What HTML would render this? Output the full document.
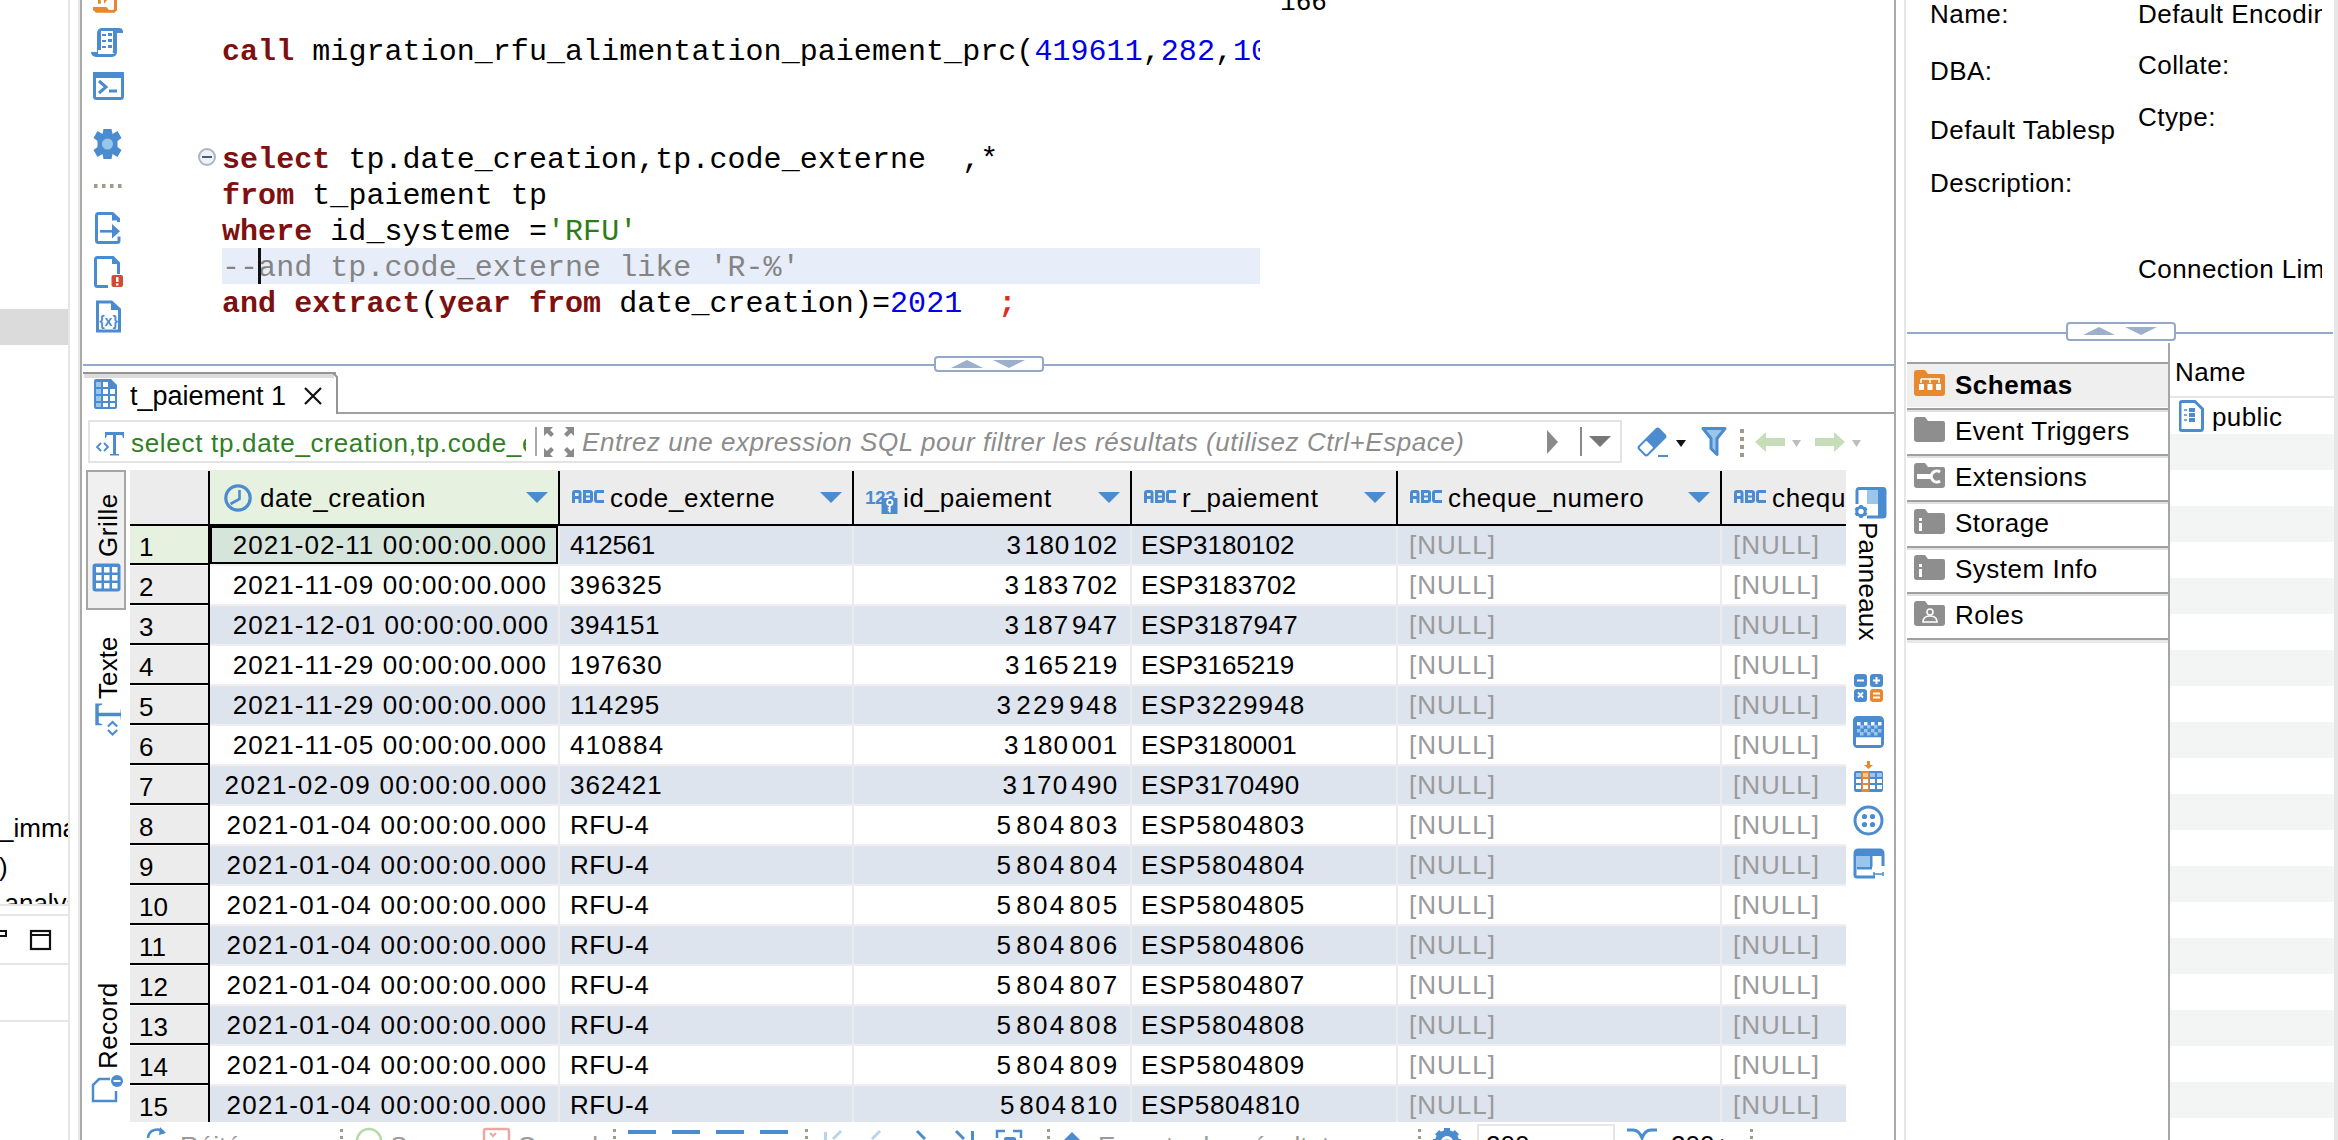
<!DOCTYPE html><html><head><meta charset="utf-8"><style>
*{margin:0;padding:0;box-sizing:border-box}
html,body{width:2338px;height:1140px;overflow:hidden;background:#fff;font-family:"Liberation Sans",sans-serif;color:#000}
.abs{position:absolute}
.mono{font-family:"Liberation Mono",monospace;font-size:30px;line-height:36px;white-space:pre;letter-spacing:0.05px}
.kw{color:#7f1010;font-weight:bold}
.num{color:#0000e6}
.str{color:#2e7d14}
.cm{color:#848484}
.semi{color:#e02c1c}
.t{white-space:pre;position:absolute}
</style></head><body>
<div class="abs" style="left:0;top:309px;width:68px;height:36px;background:#dbdbdb"></div>
<div class="abs" style="left:68px;top:0;width:2px;height:1140px;background:#e6e6e6"></div>
<div class="abs" style="left:78px;top:0;width:2px;height:1140px;background:#e8e8e8"></div>
<div class="abs" style="left:80px;top:0;width:2px;height:1140px;background:#a9a9a9"></div>
<div class="abs" style="left:222px;top:248px;width:1038px;height:36px;background:#e8eef9"></div>
<div class="abs" style="left:0;top:0;width:1260px;height:360px;overflow:hidden">
<div class="abs mono" style="left:222px;top:34px"><span class="kw">call</span> migration_rfu_alimentation_paiement_prc(<span class="num">419611</span>,<span class="num">282</span>,<span class="num">1000</span></div>
<div class="abs mono" style="left:222px;top:142px"><span class="kw">select</span> tp.date_creation,tp.code_externe  ,*</div>
<div class="abs mono" style="left:222px;top:178px"><span class="kw">from</span> t_paiement tp</div>
<div class="abs mono" style="left:222px;top:214px"><span class="kw">where</span> id_systeme =<span class="str">'RFU'</span></div>
<div class="abs mono" style="left:222px;top:250px"><span class="cm">--and tp.code_externe like 'R-%'</span></div>
<div class="abs mono" style="left:222px;top:286px"><span class="kw">and</span> <span class="kw">extract</span>(<span class="kw">year</span> <span class="kw">from</span> date_creation)=<span class="num">2021</span>  <span class="semi" style="font-weight:bold">;</span></div>
</div>
<div class="abs" style="left:258px;top:248px;width:3px;height:36px;background:#111"></div>
<div class="abs mono" style="left:1280px;top:-15px;font-size:26px">166</div>
<div class="abs" style="left:198px;top:148px;width:18px;height:18px;border-radius:50%;border:2px solid #a9b6c8;background:#eef1f5"></div>
<div class="abs" style="left:202px;top:156px;width:10px;height:2px;background:#4a5a70"></div>
<div class="abs" style="left:83px;top:364px;width:1811px;height:2px;background:#94a9c9"></div>
<div class="abs" style="left:934px;top:356px;width:110px;height:16px;border:2px solid #94a9c9;border-radius:4px;background:#fff"></div>
<svg class="abs" style="left:934px;top:356px" width="110" height="16"><polygon points="17,12 33,4 49,12" fill="#9cb0cc"/><polygon points="59,4 91,4 75,12" fill="#9cb0cc"/></svg>
<div class="abs" style="left:1894px;top:0;width:2px;height:1140px;background:#a9a9a9"></div>
<div class="abs" style="left:1904px;top:0;width:2px;height:1140px;background:#e6e6e6"></div>
<svg class="abs" style="left:85px;top:0" width="45" height="340"><path d="M8,7 H21.5 L24,10 H28 L29,9 V-1 H32 V10.5 L29.5,12.8 H11 L8,10 Z" fill="#e5882f"/><rect x="13" y="-1" width="2.8" height="4.8" fill="#e5882f"/><path d="M19,-1 H23 L19,3.8Z" fill="#e5882f"/><path d="M17,28 h17 a4,4 0 0 1 4,4 v1 h-6 v19 a5,5 0 0 1 -5,5 h-16 a5,5 0 0 1 -5,-5 v-0 h6 v-19 a5,5 0 0 1 5,-5z" fill="#4a8ccf"/><path d="M16,31 h12 v19 a3,3 0 0 0 2,4 h-17 v-4 h3z" fill="#fff"/><rect x="17" y="34" width="4" height="2" fill="#4a8ccf"/><rect x="23" y="33" width="4" height="3" fill="#4a8ccf"/><rect x="17" y="40" width="4" height="2" fill="#4a8ccf"/><rect x="23" y="39" width="4" height="3" fill="#4a8ccf"/><rect x="17" y="46" width="4" height="2" fill="#4a8ccf"/><rect x="23" y="45" width="4" height="3" fill="#4a8ccf"/><rect x="9.5" y="73.5" width="28" height="25" rx="2" fill="none" stroke="#4a8ccf" stroke-width="3"/><rect x="8" y="72" width="31" height="6" fill="#4a8ccf"/><path d="M14,81 l7,6 l-7,6" fill="none" stroke="#4a8ccf" stroke-width="3"/><rect x="24" y="89.5" width="8" height="3" fill="#4a8ccf"/><g transform="translate(22.5,144)"><path d="M-4,-15 h8 l1,5 l5,-3 l4,7 l-4,3 v6 l4,3 l-4,7 l-5,-3 l-1,5 h-8 l-1,-5 l-5,3 l-4,-7 l4,-3 v-6 l-4,-3 l4,-7 l5,3z" fill="#4a8ccf"/><circle r="5.5" fill="#9ac6ea"/></g><rect x="9" y="184" width="3.5" height="4" fill="#a09a8a"/><rect x="17" y="184" width="3.5" height="4" fill="#a09a8a"/><rect x="25" y="184" width="3.5" height="4" fill="#a09a8a"/><rect x="33" y="184" width="3.5" height="4" fill="#a09a8a"/><path d="M33.5,222 v-3 l-6,-5.5 h-14 a2,2 0 0 0 -2,2 v25 a2,2 0 0 0 2,2 h18.5 a2,2 0 0 0 2,-2 v-4" fill="none" stroke="#4a8ccf" stroke-width="3"/><path d="M27,213 v7.5 h7.5z" fill="#4a8ccf"/><rect x="15" y="230" width="15" height="2.6" fill="#4a8ccf"/><path d="M27,224 l8,7.3 l-8,7.3z" fill="#4a8ccf"/><path d="M23,286.5 h-10.5 a2,2 0 0 1 -2,-2 v-25 a2,2 0 0 1 2,-2 h15.5 l5.5,5.5 v11" fill="none" stroke="#4a8ccf" stroke-width="3"/><path d="M27,258 v6 h6z" fill="#4a8ccf"/><rect x="26.5" y="275" width="11.5" height="12" rx="2" fill="#d14a35"/><rect x="31" y="277" width="2.5" height="5" fill="#fff"/><rect x="31" y="283.5" width="2.5" height="2" fill="#fff"/><path d="M12.5,331 v-29 h14 l8,7.5 v21.5z" fill="none" stroke="#4a8ccf" stroke-width="3"/><path d="M26,302 v8 h8z" fill="#4a8ccf"/><text x="23.5" y="325.5" font-family="Liberation Sans" font-weight="bold" font-size="14" fill="#4a8ccf" text-anchor="middle">{x}</text></svg>
<div class="abs" style="left:83px;top:372px;width:253px;height:2px;background:#959595"></div>
<div class="abs" style="left:84px;top:374px;width:250px;height:4px;background:#dcdcdc"></div>
<svg class="abs" style="left:330px;top:372px" width="10" height="44"><path d="M0,1 h3 l4,4 v36 h3" fill="none" stroke="#959595" stroke-width="2"/></svg>
<div class="abs" style="left:338px;top:412px;width:1556px;height:2px;background:#a0a0a0"></div>
<svg class="abs" style="left:93px;top:379px" width="26" height="31"><path d="M3,0 h15 l6,6 v22 a2,2 0 0 1 -2,2 h-19 a2,2 0 0 1 -2,-2 v-26 a2,2 0 0 1 2,-2z" fill="#4a8ccf"/><rect x="3" y="3" width="5" height="5" fill="#9ac6ea"/><rect x="3" y="10" width="5" height="5" fill="#9ac6ea"/><rect x="3" y="17" width="5" height="5" fill="#9ac6ea"/><rect x="3" y="24" width="5" height="4" fill="#9ac6ea"/><rect x="10" y="3" width="5" height="5" fill="#fff"/><rect x="10" y="10" width="5" height="5" fill="#fff"/><rect x="10" y="17" width="5" height="5" fill="#fff"/><rect x="10" y="24" width="5" height="4" fill="#fff"/><rect x="17" y="10" width="5" height="5" fill="#fff"/><rect x="17" y="17" width="5" height="5" fill="#fff"/><rect x="17" y="24" width="5" height="4" fill="#fff"/></svg>
<div class="t" style="left:130px;top:380px;font-size:27px;line-height:32px">t_paiement 1</div>
<svg class="abs" style="left:302px;top:385px" width="22" height="22"><path d="M3,3 L19,19 M19,3 L3,19" stroke="#111" stroke-width="2.2"/></svg>
<div class="abs" style="left:88px;top:420px;width:1534px;height:43px;border:2px solid #e3e3e3;background:#fff"></div>
<svg class="abs" style="left:94px;top:430px" width="32" height="26"><path d="M7,13 l-4,4 l4,4 M10,13 l4,4 l-4,4" fill="none" stroke="#4a8ccf" stroke-width="1.8"/><path d="M11,2 h19 v6 l-1,0 l-1,-3 h-6 v19 h3 v1.5 h-9 v-1.5 h3 v-19 h-6 l-1,3 h-1z" fill="#4a8ccf"/></svg>
<div class="abs" style="left:130px;top:424px;width:396px;height:36px;overflow:hidden"><div class="t" style="left:1px;top:3px;font-size:26px;line-height:32px;letter-spacing:0.7px;color:#2e8022">select tp.date_creation,tp.code_externe  ,*</div></div>
<div class="abs" style="left:535px;top:427px;width:2px;height:29px;background:#a8a8a8"></div>
<svg class="abs" style="left:543px;top:426px" width="32" height="32" fill="#8a8a8a"><path d="M1,1 h9 l-3,3 l4,4 l-3,3 l-4,-4 l-3,3z"/><path d="M31,1 h-9 l3,3 l-4,4 l3,3 l4,-4 l3,3z"/><path d="M1,31 h9 l-3,-3 l4,-4 l-3,-3 l-4,4 l-3,-3z"/><path d="M31,31 h-9 l3,-3 l-4,-4 l3,-3 l4,4 l3,-3z"/></svg>
<div class="t" style="left:582px;top:426px;font-size:26px;line-height:32px;letter-spacing:0.55px;color:#8c8c8c;font-style:italic">Entrez une expression SQL pour filtrer les résultats (utilisez Ctrl+Espace)</div>
<svg class="abs" style="left:1540px;top:426px" width="80" height="32"><path d="M7,4 l11,12 l-11,12z" fill="#8a8a8a"/><rect x="40" y="1" width="2" height="29" fill="#8a8a8a"/><path d="M49,10 h22 l-11,11z" fill="#777"/></svg>
<svg class="abs" style="left:1636px;top:424px" width="240" height="36"><g transform="translate(16,18) rotate(45)"><rect x="-7" y="-15" width="14" height="30" rx="3" fill="#4a8ccf"/><rect x="-5" y="3" width="10" height="10" rx="1" fill="#fff"/></g><rect x="22" y="31" width="10" height="2" fill="#4a8ccf"/><path d="M40,16 h10 l-5,7z" fill="#111"/><path d="M67,4.5 h22 l-8,10 v16 l-6,-6 v-10z" fill="#9ac6ea" stroke="#4a8ccf" stroke-width="3" stroke-linejoin="round"/><rect x="104" y="5" width="4" height="4" fill="#a09a8a"/><rect x="104" y="13" width="4" height="4" fill="#a09a8a"/><rect x="104" y="21" width="4" height="4" fill="#a09a8a"/><rect x="104" y="29" width="4" height="4" fill="#a09a8a"/><path d="M119,18 l11,-10 v6 h19 v8 h-19 v6z" fill="#c5deb9"/><path d="M156,16 h9 l-4.5,7z" fill="#bdbdbd"/><path d="M209,18 l-11,-10 v6 h-19 v8 h19 v6z" fill="#c5deb9"/><path d="M216,16 h9 l-4.5,7z" fill="#bdbdbd"/></svg>
<div class="abs" style="left:130px;top:470px;width:1716px;height:54px;background:#ececec"></div>
<div class="abs" style="left:210px;top:470px;width:348px;height:54px;background:#e7f1e0"></div>
<div class="abs" style="left:208px;top:471px;width:2px;height:55px;background:#000"></div>
<div class="abs" style="left:558px;top:471px;width:2px;height:55px;background:#000"></div>
<div class="abs" style="left:852px;top:471px;width:2px;height:55px;background:#000"></div>
<div class="abs" style="left:1130px;top:471px;width:2px;height:55px;background:#000"></div>
<div class="abs" style="left:1396px;top:471px;width:2px;height:55px;background:#000"></div>
<div class="abs" style="left:1720px;top:471px;width:2px;height:55px;background:#000"></div>
<div class="abs" style="left:130px;top:524px;width:1716px;height:2px;background:#000"></div>
<div class="t" style="left:260px;top:483px;font-size:26px;line-height:30px;letter-spacing:0.65px">date_creation</div>
<div class="t" style="left:610px;top:483px;font-size:26px;line-height:30px;letter-spacing:0.65px">code_externe</div>
<div class="t" style="left:903px;top:483px;font-size:26px;line-height:30px;letter-spacing:0.65px">id_paiement</div>
<div class="t" style="left:1182px;top:483px;font-size:26px;line-height:30px;letter-spacing:0.65px">r_paiement</div>
<div class="t" style="left:1448px;top:483px;font-size:26px;line-height:30px;letter-spacing:0.65px">cheque_numero</div>
<div class="abs" style="left:1722px;top:470px;width:124px;height:54px;overflow:hidden"><div class="t" style="left:50px;top:13px;font-size:26px;line-height:30px;letter-spacing:0.65px">cheque_montant</div></div>
<svg class="abs" style="left:572px;top:490px" width="33" height="13" fill="#4a8ccf"><path fill-rule="evenodd" d="M0,13 V3 Q0,0 3,0 H6.5 Q9.5,0 9.5,3 V13 H6.5 V9 H3 V13 Z M3,3 H6.5 V6 H3 Z"/><path fill-rule="evenodd" d="M11,0 H17.5 Q21,0 21,3 V10 Q21,13 17.5,13 H11 Z M14,3 H18 V5.5 H14Z M14,7.5 H18 V10 H14Z"/><path d="M25,0 H32 V3 H25 V10 H32 V13 H25 Q22,13 22,10 V3 Q22,0 25,0Z"/></svg>
<svg class="abs" style="left:1144px;top:490px" width="33" height="13" fill="#4a8ccf"><path fill-rule="evenodd" d="M0,13 V3 Q0,0 3,0 H6.5 Q9.5,0 9.5,3 V13 H6.5 V9 H3 V13 Z M3,3 H6.5 V6 H3 Z"/><path fill-rule="evenodd" d="M11,0 H17.5 Q21,0 21,3 V10 Q21,13 17.5,13 H11 Z M14,3 H18 V5.5 H14Z M14,7.5 H18 V10 H14Z"/><path d="M25,0 H32 V3 H25 V10 H32 V13 H25 Q22,13 22,10 V3 Q22,0 25,0Z"/></svg>
<svg class="abs" style="left:1410px;top:490px" width="33" height="13" fill="#4a8ccf"><path fill-rule="evenodd" d="M0,13 V3 Q0,0 3,0 H6.5 Q9.5,0 9.5,3 V13 H6.5 V9 H3 V13 Z M3,3 H6.5 V6 H3 Z"/><path fill-rule="evenodd" d="M11,0 H17.5 Q21,0 21,3 V10 Q21,13 17.5,13 H11 Z M14,3 H18 V5.5 H14Z M14,7.5 H18 V10 H14Z"/><path d="M25,0 H32 V3 H25 V10 H32 V13 H25 Q22,13 22,10 V3 Q22,0 25,0Z"/></svg>
<svg class="abs" style="left:1734px;top:490px" width="33" height="13" fill="#4a8ccf"><path fill-rule="evenodd" d="M0,13 V3 Q0,0 3,0 H6.5 Q9.5,0 9.5,3 V13 H6.5 V9 H3 V13 Z M3,3 H6.5 V6 H3 Z"/><path fill-rule="evenodd" d="M11,0 H17.5 Q21,0 21,3 V10 Q21,13 17.5,13 H11 Z M14,3 H18 V5.5 H14Z M14,7.5 H18 V10 H14Z"/><path d="M25,0 H32 V3 H25 V10 H32 V13 H25 Q22,13 22,10 V3 Q22,0 25,0Z"/></svg>
<svg class="abs" style="left:223px;top:483px" width="30" height="30"><circle cx="15" cy="15" r="12.2" fill="none" stroke="#4a8ccf" stroke-width="3.2"/><path d="M16.5,7 v9 l-9,5" fill="none" stroke="#4a8ccf" stroke-width="2.6"/></svg>
<svg class="abs" style="left:864px;top:488px" width="36" height="28"><text x="1" y="16" font-family="Liberation Sans" font-weight="bold" font-size="19" fill="#4a8ccf" letter-spacing="-0.5">123</text><rect x="17.5" y="10" width="16" height="16" fill="#4a8ccf"/><circle cx="25.8" cy="14.5" r="2.7" fill="none" stroke="#fff" stroke-width="1.8"/><path d="M25.8,17 v7.5 M25.8,20 h-2 M25.8,22.5 h-2" stroke="#fff" stroke-width="1.6"/></svg>
<svg class="abs" style="left:526px;top:492px" width="24" height="12"><path d="M0,0 h22 l-11,11z" fill="#4a8ccf"/></svg>
<svg class="abs" style="left:820px;top:492px" width="24" height="12"><path d="M0,0 h22 l-11,11z" fill="#4a8ccf"/></svg>
<svg class="abs" style="left:1098px;top:492px" width="24" height="12"><path d="M0,0 h22 l-11,11z" fill="#4a8ccf"/></svg>
<svg class="abs" style="left:1364px;top:492px" width="24" height="12"><path d="M0,0 h22 l-11,11z" fill="#4a8ccf"/></svg>
<svg class="abs" style="left:1688px;top:492px" width="24" height="12"><path d="M0,0 h22 l-11,11z" fill="#4a8ccf"/></svg>
<div class="abs" style="left:210px;top:526px;width:1636px;height:38px;background:#dde4ee"></div>
<div class="abs" style="left:210px;top:564px;width:1636px;height:2px;background:#efefef"></div>
<div class="abs" style="left:130px;top:526px;width:78px;height:38px;background:#e7f1e0"></div>
<div class="abs" style="left:130px;top:563px;width:80px;height:2px;background:#000"></div>
<div class="t" style="left:139px;top:532px;font-size:26px;line-height:30px">1</div>
<div class="t" style="left:570px;top:530px;font-size:26px;line-height:30px;letter-spacing:-0.32px">412561</div>
<div class="t" style="left:1006.5px;top:530px;font-size:26px;line-height:30px;letter-spacing:0.58px">3<span style="margin-left:3px">180</span><span style="margin-left:3px">102</span></div>
<div class="t" style="left:1141px;top:530px;font-size:26px;line-height:30px;letter-spacing:0.02px">ESP3180102</div>
<div class="t" style="left:1409px;top:530px;font-size:26px;line-height:30px;color:#9a9a9a;letter-spacing:1.0px">[NULL]</div>
<div class="t" style="left:1733px;top:530px;font-size:26px;line-height:30px;color:#9a9a9a;letter-spacing:1.0px">[NULL]</div>
<div class="abs" style="left:210px;top:566px;width:1636px;height:38px;background:#ffffff"></div>
<div class="abs" style="left:210px;top:604px;width:1636px;height:2px;background:#efefef"></div>
<div class="abs" style="left:130px;top:566px;width:78px;height:38px;background:#ececec"></div>
<div class="abs" style="left:130px;top:603px;width:80px;height:2px;background:#000"></div>
<div class="t" style="left:139px;top:572px;font-size:26px;line-height:30px">2</div>
<div class="t" style="left:232.8px;top:570px;font-size:26px;line-height:30px;letter-spacing:1.05px">2021-11-09 00:00:00.000</div>
<div class="t" style="left:570px;top:570px;font-size:26px;line-height:30px;letter-spacing:1.00px">396325</div>
<div class="t" style="left:1004.6px;top:570px;font-size:26px;line-height:30px;letter-spacing:0.90px">3<span style="margin-left:3px">183</span><span style="margin-left:3px">702</span></div>
<div class="t" style="left:1141px;top:570px;font-size:26px;line-height:30px;letter-spacing:0.22px">ESP3183702</div>
<div class="t" style="left:1409px;top:570px;font-size:26px;line-height:30px;color:#9a9a9a;letter-spacing:1.0px">[NULL]</div>
<div class="t" style="left:1733px;top:570px;font-size:26px;line-height:30px;color:#9a9a9a;letter-spacing:1.0px">[NULL]</div>
<div class="abs" style="left:210px;top:606px;width:1636px;height:38px;background:#dde4ee"></div>
<div class="abs" style="left:210px;top:644px;width:1636px;height:2px;background:#efefef"></div>
<div class="abs" style="left:130px;top:606px;width:78px;height:38px;background:#ececec"></div>
<div class="abs" style="left:130px;top:643px;width:80px;height:2px;background:#000"></div>
<div class="t" style="left:139px;top:612px;font-size:26px;line-height:30px">3</div>
<div class="t" style="left:232.8px;top:610px;font-size:26px;line-height:30px;letter-spacing:1.05px">2021-12-01 00:00:00.000</div>
<div class="t" style="left:570px;top:610px;font-size:26px;line-height:30px;letter-spacing:0.52px">394151</div>
<div class="t" style="left:1004.6px;top:610px;font-size:26px;line-height:30px;letter-spacing:0.90px">3<span style="margin-left:3px">187</span><span style="margin-left:3px">947</span></div>
<div class="t" style="left:1141px;top:610px;font-size:26px;line-height:30px;letter-spacing:0.38px">ESP3187947</div>
<div class="t" style="left:1409px;top:610px;font-size:26px;line-height:30px;color:#9a9a9a;letter-spacing:1.0px">[NULL]</div>
<div class="t" style="left:1733px;top:610px;font-size:26px;line-height:30px;color:#9a9a9a;letter-spacing:1.0px">[NULL]</div>
<div class="abs" style="left:210px;top:646px;width:1636px;height:38px;background:#ffffff"></div>
<div class="abs" style="left:210px;top:684px;width:1636px;height:2px;background:#efefef"></div>
<div class="abs" style="left:130px;top:646px;width:78px;height:38px;background:#ececec"></div>
<div class="abs" style="left:130px;top:683px;width:80px;height:2px;background:#000"></div>
<div class="t" style="left:139px;top:652px;font-size:26px;line-height:30px">4</div>
<div class="t" style="left:232.8px;top:650px;font-size:26px;line-height:30px;letter-spacing:1.05px">2021-11-29 00:00:00.000</div>
<div class="t" style="left:570px;top:650px;font-size:26px;line-height:30px;letter-spacing:1.00px">197630</div>
<div class="t" style="left:1005.0px;top:650px;font-size:26px;line-height:30px;letter-spacing:0.83px">3<span style="margin-left:3px">165</span><span style="margin-left:3px">219</span></div>
<div class="t" style="left:1141px;top:650px;font-size:26px;line-height:30px;letter-spacing:-0.01px">ESP3165219</div>
<div class="t" style="left:1409px;top:650px;font-size:26px;line-height:30px;color:#9a9a9a;letter-spacing:1.0px">[NULL]</div>
<div class="t" style="left:1733px;top:650px;font-size:26px;line-height:30px;color:#9a9a9a;letter-spacing:1.0px">[NULL]</div>
<div class="abs" style="left:210px;top:686px;width:1636px;height:38px;background:#dde4ee"></div>
<div class="abs" style="left:210px;top:724px;width:1636px;height:2px;background:#efefef"></div>
<div class="abs" style="left:130px;top:686px;width:78px;height:38px;background:#ececec"></div>
<div class="abs" style="left:130px;top:723px;width:80px;height:2px;background:#000"></div>
<div class="t" style="left:139px;top:692px;font-size:26px;line-height:30px">5</div>
<div class="t" style="left:232.8px;top:690px;font-size:26px;line-height:30px;letter-spacing:1.05px">2021-11-29 00:00:00.000</div>
<div class="t" style="left:570px;top:690px;font-size:26px;line-height:30px;letter-spacing:0.88px">114295</div>
<div class="t" style="left:996.5px;top:690px;font-size:26px;line-height:30px;letter-spacing:2.25px">3<span style="margin-left:3px">229</span><span style="margin-left:3px">948</span></div>
<div class="t" style="left:1141px;top:690px;font-size:26px;line-height:30px;letter-spacing:1.10px">ESP3229948</div>
<div class="t" style="left:1409px;top:690px;font-size:26px;line-height:30px;color:#9a9a9a;letter-spacing:1.0px">[NULL]</div>
<div class="t" style="left:1733px;top:690px;font-size:26px;line-height:30px;color:#9a9a9a;letter-spacing:1.0px">[NULL]</div>
<div class="abs" style="left:210px;top:726px;width:1636px;height:38px;background:#ffffff"></div>
<div class="abs" style="left:210px;top:764px;width:1636px;height:2px;background:#efefef"></div>
<div class="abs" style="left:130px;top:726px;width:78px;height:38px;background:#ececec"></div>
<div class="abs" style="left:130px;top:763px;width:80px;height:2px;background:#000"></div>
<div class="t" style="left:139px;top:732px;font-size:26px;line-height:30px">6</div>
<div class="t" style="left:232.8px;top:730px;font-size:26px;line-height:30px;letter-spacing:1.05px">2021-11-05 00:00:00.000</div>
<div class="t" style="left:570px;top:730px;font-size:26px;line-height:30px;letter-spacing:1.28px">410884</div>
<div class="t" style="left:1004.0px;top:730px;font-size:26px;line-height:30px;letter-spacing:1.00px">3<span style="margin-left:3px">180</span><span style="margin-left:3px">001</span></div>
<div class="t" style="left:1141px;top:730px;font-size:26px;line-height:30px;letter-spacing:0.27px">ESP3180001</div>
<div class="t" style="left:1409px;top:730px;font-size:26px;line-height:30px;color:#9a9a9a;letter-spacing:1.0px">[NULL]</div>
<div class="t" style="left:1733px;top:730px;font-size:26px;line-height:30px;color:#9a9a9a;letter-spacing:1.0px">[NULL]</div>
<div class="abs" style="left:210px;top:766px;width:1636px;height:38px;background:#dde4ee"></div>
<div class="abs" style="left:210px;top:804px;width:1636px;height:2px;background:#efefef"></div>
<div class="abs" style="left:130px;top:766px;width:78px;height:38px;background:#ececec"></div>
<div class="abs" style="left:130px;top:803px;width:80px;height:2px;background:#000"></div>
<div class="t" style="left:139px;top:772px;font-size:26px;line-height:30px">7</div>
<div class="t" style="left:224.6px;top:770px;font-size:26px;line-height:30px;letter-spacing:1.34px">2021-02-09 00:00:00.000</div>
<div class="t" style="left:570px;top:770px;font-size:26px;line-height:30px;letter-spacing:1.00px">362421</div>
<div class="t" style="left:1002.5px;top:770px;font-size:26px;line-height:30px;letter-spacing:1.25px">3<span style="margin-left:3px">170</span><span style="margin-left:3px">490</span></div>
<div class="t" style="left:1141px;top:770px;font-size:26px;line-height:30px;letter-spacing:0.54px">ESP3170490</div>
<div class="t" style="left:1409px;top:770px;font-size:26px;line-height:30px;color:#9a9a9a;letter-spacing:1.0px">[NULL]</div>
<div class="t" style="left:1733px;top:770px;font-size:26px;line-height:30px;color:#9a9a9a;letter-spacing:1.0px">[NULL]</div>
<div class="abs" style="left:210px;top:806px;width:1636px;height:38px;background:#ffffff"></div>
<div class="abs" style="left:210px;top:844px;width:1636px;height:2px;background:#efefef"></div>
<div class="abs" style="left:130px;top:806px;width:78px;height:38px;background:#ececec"></div>
<div class="abs" style="left:130px;top:843px;width:80px;height:2px;background:#000"></div>
<div class="t" style="left:139px;top:812px;font-size:26px;line-height:30px">8</div>
<div class="t" style="left:226.5px;top:810px;font-size:26px;line-height:30px;letter-spacing:1.25px">2021-01-04 00:00:00.000</div>
<div class="t" style="left:570px;top:810px;font-size:26px;line-height:30px;letter-spacing:0.52px">RFU-4</div>
<div class="t" style="left:996.5px;top:810px;font-size:26px;line-height:30px;letter-spacing:2.25px">5<span style="margin-left:3px">804</span><span style="margin-left:3px">803</span></div>
<div class="t" style="left:1141px;top:810px;font-size:26px;line-height:30px;letter-spacing:1.10px">ESP5804803</div>
<div class="t" style="left:1409px;top:810px;font-size:26px;line-height:30px;color:#9a9a9a;letter-spacing:1.0px">[NULL]</div>
<div class="t" style="left:1733px;top:810px;font-size:26px;line-height:30px;color:#9a9a9a;letter-spacing:1.0px">[NULL]</div>
<div class="abs" style="left:210px;top:846px;width:1636px;height:38px;background:#dde4ee"></div>
<div class="abs" style="left:210px;top:884px;width:1636px;height:2px;background:#efefef"></div>
<div class="abs" style="left:130px;top:846px;width:78px;height:38px;background:#ececec"></div>
<div class="abs" style="left:130px;top:883px;width:80px;height:2px;background:#000"></div>
<div class="t" style="left:139px;top:852px;font-size:26px;line-height:30px">9</div>
<div class="t" style="left:226.5px;top:850px;font-size:26px;line-height:30px;letter-spacing:1.25px">2021-01-04 00:00:00.000</div>
<div class="t" style="left:570px;top:850px;font-size:26px;line-height:30px;letter-spacing:0.52px">RFU-4</div>
<div class="t" style="left:996.5px;top:850px;font-size:26px;line-height:30px;letter-spacing:2.25px">5<span style="margin-left:3px">804</span><span style="margin-left:3px">804</span></div>
<div class="t" style="left:1141px;top:850px;font-size:26px;line-height:30px;letter-spacing:1.10px">ESP5804804</div>
<div class="t" style="left:1409px;top:850px;font-size:26px;line-height:30px;color:#9a9a9a;letter-spacing:1.0px">[NULL]</div>
<div class="t" style="left:1733px;top:850px;font-size:26px;line-height:30px;color:#9a9a9a;letter-spacing:1.0px">[NULL]</div>
<div class="abs" style="left:210px;top:886px;width:1636px;height:38px;background:#ffffff"></div>
<div class="abs" style="left:210px;top:924px;width:1636px;height:2px;background:#efefef"></div>
<div class="abs" style="left:130px;top:886px;width:78px;height:38px;background:#ececec"></div>
<div class="abs" style="left:130px;top:923px;width:80px;height:2px;background:#000"></div>
<div class="t" style="left:139px;top:892px;font-size:26px;line-height:30px">10</div>
<div class="t" style="left:226.5px;top:890px;font-size:26px;line-height:30px;letter-spacing:1.25px">2021-01-04 00:00:00.000</div>
<div class="t" style="left:570px;top:890px;font-size:26px;line-height:30px;letter-spacing:0.52px">RFU-4</div>
<div class="t" style="left:996.5px;top:890px;font-size:26px;line-height:30px;letter-spacing:2.25px">5<span style="margin-left:3px">804</span><span style="margin-left:3px">805</span></div>
<div class="t" style="left:1141px;top:890px;font-size:26px;line-height:30px;letter-spacing:1.10px">ESP5804805</div>
<div class="t" style="left:1409px;top:890px;font-size:26px;line-height:30px;color:#9a9a9a;letter-spacing:1.0px">[NULL]</div>
<div class="t" style="left:1733px;top:890px;font-size:26px;line-height:30px;color:#9a9a9a;letter-spacing:1.0px">[NULL]</div>
<div class="abs" style="left:210px;top:926px;width:1636px;height:38px;background:#dde4ee"></div>
<div class="abs" style="left:210px;top:964px;width:1636px;height:2px;background:#efefef"></div>
<div class="abs" style="left:130px;top:926px;width:78px;height:38px;background:#ececec"></div>
<div class="abs" style="left:130px;top:963px;width:80px;height:2px;background:#000"></div>
<div class="t" style="left:139px;top:932px;font-size:26px;line-height:30px">11</div>
<div class="t" style="left:226.5px;top:930px;font-size:26px;line-height:30px;letter-spacing:1.25px">2021-01-04 00:00:00.000</div>
<div class="t" style="left:570px;top:930px;font-size:26px;line-height:30px;letter-spacing:0.52px">RFU-4</div>
<div class="t" style="left:996.5px;top:930px;font-size:26px;line-height:30px;letter-spacing:2.25px">5<span style="margin-left:3px">804</span><span style="margin-left:3px">806</span></div>
<div class="t" style="left:1141px;top:930px;font-size:26px;line-height:30px;letter-spacing:1.10px">ESP5804806</div>
<div class="t" style="left:1409px;top:930px;font-size:26px;line-height:30px;color:#9a9a9a;letter-spacing:1.0px">[NULL]</div>
<div class="t" style="left:1733px;top:930px;font-size:26px;line-height:30px;color:#9a9a9a;letter-spacing:1.0px">[NULL]</div>
<div class="abs" style="left:210px;top:966px;width:1636px;height:38px;background:#ffffff"></div>
<div class="abs" style="left:210px;top:1004px;width:1636px;height:2px;background:#efefef"></div>
<div class="abs" style="left:130px;top:966px;width:78px;height:38px;background:#ececec"></div>
<div class="abs" style="left:130px;top:1003px;width:80px;height:2px;background:#000"></div>
<div class="t" style="left:139px;top:972px;font-size:26px;line-height:30px">12</div>
<div class="t" style="left:226.5px;top:970px;font-size:26px;line-height:30px;letter-spacing:1.25px">2021-01-04 00:00:00.000</div>
<div class="t" style="left:570px;top:970px;font-size:26px;line-height:30px;letter-spacing:0.52px">RFU-4</div>
<div class="t" style="left:996.5px;top:970px;font-size:26px;line-height:30px;letter-spacing:2.25px">5<span style="margin-left:3px">804</span><span style="margin-left:3px">807</span></div>
<div class="t" style="left:1141px;top:970px;font-size:26px;line-height:30px;letter-spacing:1.10px">ESP5804807</div>
<div class="t" style="left:1409px;top:970px;font-size:26px;line-height:30px;color:#9a9a9a;letter-spacing:1.0px">[NULL]</div>
<div class="t" style="left:1733px;top:970px;font-size:26px;line-height:30px;color:#9a9a9a;letter-spacing:1.0px">[NULL]</div>
<div class="abs" style="left:210px;top:1006px;width:1636px;height:38px;background:#dde4ee"></div>
<div class="abs" style="left:210px;top:1044px;width:1636px;height:2px;background:#efefef"></div>
<div class="abs" style="left:130px;top:1006px;width:78px;height:38px;background:#ececec"></div>
<div class="abs" style="left:130px;top:1043px;width:80px;height:2px;background:#000"></div>
<div class="t" style="left:139px;top:1012px;font-size:26px;line-height:30px">13</div>
<div class="t" style="left:226.5px;top:1010px;font-size:26px;line-height:30px;letter-spacing:1.25px">2021-01-04 00:00:00.000</div>
<div class="t" style="left:570px;top:1010px;font-size:26px;line-height:30px;letter-spacing:0.52px">RFU-4</div>
<div class="t" style="left:996.5px;top:1010px;font-size:26px;line-height:30px;letter-spacing:2.25px">5<span style="margin-left:3px">804</span><span style="margin-left:3px">808</span></div>
<div class="t" style="left:1141px;top:1010px;font-size:26px;line-height:30px;letter-spacing:1.10px">ESP5804808</div>
<div class="t" style="left:1409px;top:1010px;font-size:26px;line-height:30px;color:#9a9a9a;letter-spacing:1.0px">[NULL]</div>
<div class="t" style="left:1733px;top:1010px;font-size:26px;line-height:30px;color:#9a9a9a;letter-spacing:1.0px">[NULL]</div>
<div class="abs" style="left:210px;top:1046px;width:1636px;height:38px;background:#ffffff"></div>
<div class="abs" style="left:210px;top:1084px;width:1636px;height:2px;background:#efefef"></div>
<div class="abs" style="left:130px;top:1046px;width:78px;height:38px;background:#ececec"></div>
<div class="abs" style="left:130px;top:1083px;width:80px;height:2px;background:#000"></div>
<div class="t" style="left:139px;top:1052px;font-size:26px;line-height:30px">14</div>
<div class="t" style="left:226.5px;top:1050px;font-size:26px;line-height:30px;letter-spacing:1.25px">2021-01-04 00:00:00.000</div>
<div class="t" style="left:570px;top:1050px;font-size:26px;line-height:30px;letter-spacing:0.52px">RFU-4</div>
<div class="t" style="left:996.5px;top:1050px;font-size:26px;line-height:30px;letter-spacing:2.25px">5<span style="margin-left:3px">804</span><span style="margin-left:3px">809</span></div>
<div class="t" style="left:1141px;top:1050px;font-size:26px;line-height:30px;letter-spacing:1.10px">ESP5804809</div>
<div class="t" style="left:1409px;top:1050px;font-size:26px;line-height:30px;color:#9a9a9a;letter-spacing:1.0px">[NULL]</div>
<div class="t" style="left:1733px;top:1050px;font-size:26px;line-height:30px;color:#9a9a9a;letter-spacing:1.0px">[NULL]</div>
<div class="abs" style="left:210px;top:1086px;width:1636px;height:38px;background:#dde4ee"></div>
<div class="abs" style="left:210px;top:1124px;width:1636px;height:2px;background:#efefef"></div>
<div class="abs" style="left:130px;top:1086px;width:78px;height:38px;background:#ececec"></div>
<div class="abs" style="left:130px;top:1123px;width:80px;height:2px;background:#000"></div>
<div class="t" style="left:139px;top:1092px;font-size:26px;line-height:30px">15</div>
<div class="t" style="left:226.5px;top:1090px;font-size:26px;line-height:30px;letter-spacing:1.25px">2021-01-04 00:00:00.000</div>
<div class="t" style="left:570px;top:1090px;font-size:26px;line-height:30px;letter-spacing:0.52px">RFU-4</div>
<div class="t" style="left:1000.0px;top:1090px;font-size:26px;line-height:30px;letter-spacing:1.67px">5<span style="margin-left:3px">804</span><span style="margin-left:3px">810</span></div>
<div class="t" style="left:1141px;top:1090px;font-size:26px;line-height:30px;letter-spacing:0.61px">ESP5804810</div>
<div class="t" style="left:1409px;top:1090px;font-size:26px;line-height:30px;color:#9a9a9a;letter-spacing:1.0px">[NULL]</div>
<div class="t" style="left:1733px;top:1090px;font-size:26px;line-height:30px;color:#9a9a9a;letter-spacing:1.0px">[NULL]</div>
<div class="abs" style="left:558px;top:526px;width:2px;height:600px;background:#ececec"></div>
<div class="abs" style="left:852px;top:526px;width:2px;height:600px;background:#ececec"></div>
<div class="abs" style="left:1130px;top:526px;width:2px;height:600px;background:#ececec"></div>
<div class="abs" style="left:1396px;top:526px;width:2px;height:600px;background:#ececec"></div>
<div class="abs" style="left:1720px;top:526px;width:2px;height:600px;background:#ececec"></div>
<div class="abs" style="left:208px;top:526px;width:2px;height:600px;background:#000"></div>
<div class="abs" style="left:210px;top:524px;width:348px;height:40px;border:2px solid #000;border-top-width:4px;background:#d6e5dc"></div>
<div class="t" style="left:232.8px;top:530px;font-size:26px;line-height:30px;letter-spacing:1.05px">2021-02-11 00:00:00.000</div>
<div class="abs" style="left:86px;top:470px;width:40px;height:140px;border:2px solid #a6a6a6;background:#f0f0f0"></div>
<div class="t" style="left:95px;top:557px;font-size:26px;line-height:26px;transform-origin:0 0;transform:rotate(-90deg);letter-spacing:0.5px;">Grille</div>
<div class="t" style="left:95px;top:699px;font-size:26px;line-height:26px;transform-origin:0 0;transform:rotate(-90deg);letter-spacing:0.1px">Texte</div>
<div class="t" style="left:95px;top:1069px;font-size:26px;line-height:26px;transform-origin:0 0;transform:rotate(-90deg);letter-spacing:0.5px;">Record</div>
<svg class="abs" style="left:91px;top:562px" width="31" height="31"><rect x="1.5" y="1.5" width="28" height="28" rx="3" fill="#4a8ccf"/><rect x="5" y="5" width="5.5" height="5.5" fill="#fff"/><rect x="5" y="13" width="5.5" height="5.5" fill="#fff"/><rect x="5" y="21" width="5.5" height="5.5" fill="#fff"/><rect x="13" y="5" width="5.5" height="5.5" fill="#fff"/><rect x="13" y="13" width="5.5" height="5.5" fill="#fff"/><rect x="13" y="21" width="5.5" height="5.5" fill="#fff"/><rect x="21" y="5" width="5.5" height="5.5" fill="#fff"/><rect x="21" y="13" width="5.5" height="5.5" fill="#fff"/><rect x="21" y="21" width="5.5" height="5.5" fill="#fff"/></svg>
<svg class="abs" style="left:93px;top:702px" width="28" height="36"><g transform="translate(0,36) rotate(-90) scale(1.15)"><path d="M7,13 l-4,4 l4,4 M10,13 l4,4 l-4,4" fill="none" stroke="#4a8ccf" stroke-width="1.8"/><path d="M11,2 h19 v6 l-1,0 l-1,-3 h-6 v19 h3 v1.5 h-9 v-1.5 h3 v-19 h-6 l-1,3 h-1z" fill="#4a8ccf"/></g></svg>
<svg class="abs" style="left:90px;top:1074px" width="34" height="30"><path d="M20,5 h-11 l-6,6 v16 h23 v-10" fill="none" stroke="#4a8ccf" stroke-width="2.5"/><circle cx="27" cy="7" r="6" fill="#4a8ccf"/><rect x="23.5" y="6" width="7" height="2" fill="#fff"/></svg>
<svg class="abs" style="left:1853px;top:486px" width="34" height="34"><path d="M4,18 V4.5 a2,2 0 0 1 2,-2 H30 a2,2 0 0 1 2,2 V29 a2,2 0 0 1 -2,2 H14" fill="none" stroke="#4a8ccf" stroke-width="3"/><rect x="14" y="4" width="11" height="14" fill="#9ac6ea"/><rect x="25" y="2.5" width="7" height="28.5" fill="#4a8ccf"/><g transform="translate(8,25.5)"><circle r="4.2" fill="none" stroke="#4a8ccf" stroke-width="3"/><rect x="-1.6" y="-6.5" width="3.2" height="3.4" fill="#4a8ccf" transform="rotate(0)"/><rect x="-1.6" y="-6.5" width="3.2" height="3.4" fill="#4a8ccf" transform="rotate(60)"/><rect x="-1.6" y="-6.5" width="3.2" height="3.4" fill="#4a8ccf" transform="rotate(120)"/><rect x="-1.6" y="-6.5" width="3.2" height="3.4" fill="#4a8ccf" transform="rotate(180)"/><rect x="-1.6" y="-6.5" width="3.2" height="3.4" fill="#4a8ccf" transform="rotate(240)"/><rect x="-1.6" y="-6.5" width="3.2" height="3.4" fill="#4a8ccf" transform="rotate(300)"/></g></svg>
<div class="t" style="left:1881px;top:522px;font-size:26px;line-height:26px;transform-origin:0 0;transform:rotate(90deg);letter-spacing:0.2px">Panneaux</div>
<svg class="abs" style="left:1853px;top:673px" width="31" height="31"><rect x="1" y="1" width="13" height="13" rx="3" fill="#4a8ccf"/><rect x="17" y="1" width="13" height="13" rx="3" fill="#4a8ccf"/><rect x="1" y="16" width="13" height="13" rx="3" fill="#4a8ccf"/><rect x="17" y="16" width="13" height="13" rx="3" fill="#e8892f"/><rect x="4" y="6.5" width="7" height="2" fill="#fff"/><rect x="20" y="6.5" width="7" height="2" fill="#fff"/><rect x="22.5" y="4" width="2" height="7" fill="#fff"/><path d="M5,19.5 l5,5 M10,19.5 l-5,5" stroke="#fff" stroke-width="1.8"/><rect x="20" y="19.5" width="7" height="2" fill="#fff"/><rect x="20" y="23.5" width="7" height="2" fill="#fff"/></svg>
<svg class="abs" style="left:1853px;top:716px" width="31" height="32"><rect x="1.5" y="1.5" width="28" height="29" rx="3" fill="none" stroke="#4a8ccf" stroke-width="3"/><rect x="1.5" y="1.5" width="28" height="20" fill="#4a8ccf"/><rect x="4" y="6" width="3.5" height="3.5" fill="#fff"/><rect x="11" y="6" width="3.5" height="3.5" fill="#fff"/><rect x="18" y="6" width="3.5" height="3.5" fill="#fff"/><rect x="25" y="6" width="3.5" height="3.5" fill="#fff"/><rect x="7" y="9" width="3.5" height="3.5" fill="#9ac6ea"/><rect x="14" y="9" width="3.5" height="3.5" fill="#9ac6ea"/><rect x="21" y="9" width="3.5" height="3.5" fill="#9ac6ea"/><rect x="4" y="13" width="3.5" height="3.5" fill="#9ac6ea"/><rect x="11" y="13" width="3.5" height="3.5" fill="#9ac6ea"/><rect x="18" y="13" width="3.5" height="3.5" fill="#9ac6ea"/><rect x="25" y="13" width="3.5" height="3.5" fill="#9ac6ea"/><rect x="7" y="16" width="3.5" height="3.5" fill="#9ac6ea"/><rect x="14" y="16" width="3.5" height="3.5" fill="#9ac6ea"/><rect x="21" y="16" width="3.5" height="3.5" fill="#9ac6ea"/><rect x="3" y="21.5" width="25" height="7.5" fill="#fff"/></svg>
<svg class="abs" style="left:1853px;top:760px" width="31" height="33"><path d="M14,1 h3 v4 h3 l-4.5,4 l-4.5,-4 h3z" fill="#e8892f"/><rect x="1" y="11" width="29" height="21" rx="2" fill="#4a8ccf"/><rect x="3" y="13" width="5" height="4" fill="#9ac6ea"/><rect x="10" y="13" width="5" height="4" fill="#9ac6ea"/><rect x="17" y="13" width="5" height="4" fill="#9ac6ea"/><rect x="24" y="13" width="5" height="4" fill="#9ac6ea"/><rect x="3" y="19" width="5" height="4" fill="#fff"/><rect x="10" y="19" width="5" height="4" fill="#fff"/><rect x="17" y="19" width="5" height="4" fill="#fff"/><rect x="24" y="19" width="5" height="4" fill="#fff"/><rect x="3" y="25" width="5" height="4" fill="#fff"/><rect x="10" y="25" width="5" height="4" fill="#fff"/><rect x="17" y="25" width="5" height="4" fill="#fff"/><rect x="24" y="25" width="5" height="4" fill="#fff"/><rect x="8.5" y="11" width="8" height="21" fill="#e8892f"/><rect x="10" y="13" width="5" height="4" fill="#f3c79a"/><rect x="10" y="19" width="5" height="4" fill="#fff"/><rect x="10" y="25" width="5" height="4" fill="#fff"/></svg>
<svg class="abs" style="left:1853px;top:805px" width="31" height="31"><circle cx="15.5" cy="15.5" r="13.5" fill="none" stroke="#4a8ccf" stroke-width="3"/><circle cx="11.5" cy="11.5" r="2.6" fill="#4a8ccf"/><circle cx="19.5" cy="11.5" r="2.6" fill="#4a8ccf"/><circle cx="11.5" cy="19.5" r="2.6" fill="#4a8ccf"/><circle cx="19.5" cy="19.5" r="2.6" fill="#4a8ccf"/></svg>
<svg class="abs" style="left:1853px;top:848px" width="33" height="32"><path d="M22,29 h-18 a2,2 0 0 1 -2,-2 v-22 a3,3 0 0 1 3,-3 h22 a3,3 0 0 1 3,3 v13" fill="none" stroke="#4a8ccf" stroke-width="3"/><rect x="2" y="2" width="28" height="6" fill="#4a8ccf"/><rect x="4" y="8" width="13" height="11" fill="#9ac6ea"/><rect x="4" y="19" width="15" height="2.5" fill="#4a8ccf"/><rect x="17" y="8" width="2.5" height="11" fill="#4a8ccf"/><path d="M21,26 h9 M21,24 v4 M30,24 v4" stroke="#4a8ccf" stroke-width="1.5"/></svg>
<div class="abs" style="left:84px;top:1122px;width:1808px;height:18px;background:#fff"></div>
<div class="abs" style="left:0;top:1124px;width:1894px;height:16px;overflow:hidden">
<div class="t" style="left:180px;top:7px;font-size:26px;line-height:30px;color:#9a9a9a">Réitérer</div>
<div class="t" style="left:390px;top:7px;font-size:26px;line-height:30px;color:#9a9a9a">Save</div>
<div class="t" style="left:517px;top:7px;font-size:26px;line-height:30px;color:#9a9a9a">Cancel</div>
<div class="t" style="left:1098px;top:7px;font-size:26px;line-height:30px;color:#9a9a9a">Exporter les résultats</div>
<div class="t" style="left:1486px;top:6px;font-size:26px;line-height:30px">200</div>
<div class="t" style="left:1671px;top:6px;font-size:26px;line-height:30px">200+</div>
<svg class="abs" style="left:0;top:0" width="1894" height="16"><path d="M148,14 a9,9 0 0 1 16,-5" fill="none" stroke="#4a8ccf" stroke-width="2.5"/><path d="M160,3 l6,6 l-7,2z" fill="#4a8ccf"/><circle cx="369" cy="17" r="12" fill="none" stroke="#b5d9a8" stroke-width="2.5"/><rect x="484" y="5" width="25" height="16" rx="2" fill="none" stroke="#e9a9a0" stroke-width="2.5"/><path d="M490,9 l3,3 l3,-3" fill="none" stroke="#e9a9a0" stroke-width="2"/><rect x="628" y="6" width="28" height="4" fill="#4a8ccf"/><rect x="672" y="6" width="28" height="4" fill="#4a8ccf"/><rect x="716" y="6" width="28" height="4" fill="#4a8ccf"/><rect x="760" y="6" width="28" height="4" fill="#4a8ccf"/><rect x="340" y="5" width="3" height="3" fill="#a09a8a"/><rect x="340" y="12" width="3" height="3" fill="#a09a8a"/><rect x="613" y="5" width="3" height="3" fill="#a09a8a"/><rect x="613" y="12" width="3" height="3" fill="#a09a8a"/><rect x="805" y="5" width="3" height="3" fill="#a09a8a"/><rect x="805" y="12" width="3" height="3" fill="#a09a8a"/><rect x="1047" y="5" width="3" height="3" fill="#a09a8a"/><rect x="1047" y="12" width="3" height="3" fill="#a09a8a"/><rect x="1418" y="5" width="3" height="3" fill="#a09a8a"/><rect x="1418" y="12" width="3" height="3" fill="#a09a8a"/><rect x="1750" y="5" width="3" height="3" fill="#a09a8a"/><rect x="1750" y="12" width="3" height="3" fill="#a09a8a"/><rect x="824" y="8" width="3" height="10" fill="#b8d4ec"/><path d="M833,15 l8,-8" stroke="#b8d4ec" stroke-width="3"/><path d="M872,15 l8,-8" stroke="#b8d4ec" stroke-width="3"/><path d="M917,7 l8,8" stroke="#4a8ccf" stroke-width="3"/><path d="M956,7 l8,8" stroke="#4a8ccf" stroke-width="3"/><rect x="971" y="7" width="3" height="10" fill="#4a8ccf"/><path d="M997,14 v-7 h8 M1013,7 h8 v7" fill="none" stroke="#4a8ccf" stroke-width="2.5"/><rect x="1004" y="13" width="12" height="5" rx="2" fill="#4a8ccf"/><path d="M1064,16 l8,-8 l8,8z" fill="#4a8ccf"/><rect x="1069" y="14" width="6" height="4" fill="#4a8ccf"/><g transform="translate(1447,18)"><circle r="9" fill="none" stroke="#4a8ccf" stroke-width="6"/><rect x="-3" y="-14" width="6" height="5" fill="#4a8ccf" transform="rotate(0)"/><rect x="-3" y="-14" width="6" height="5" fill="#4a8ccf" transform="rotate(45)"/><rect x="-3" y="-14" width="6" height="5" fill="#4a8ccf" transform="rotate(90)"/><rect x="-3" y="-14" width="6" height="5" fill="#4a8ccf" transform="rotate(135)"/><rect x="-3" y="-14" width="6" height="5" fill="#4a8ccf" transform="rotate(180)"/><rect x="-3" y="-14" width="6" height="5" fill="#4a8ccf" transform="rotate(225)"/><rect x="-3" y="-14" width="6" height="5" fill="#4a8ccf" transform="rotate(270)"/><rect x="-3" y="-14" width="6" height="5" fill="#4a8ccf" transform="rotate(315)"/><circle r="3" fill="#9ac6ea"/></g><rect x="1478" y="1" width="136" height="20" fill="none" stroke="#e6e6e6" stroke-width="2"/><path d="M1627,6 h6 q6,0 9,8 q3,-8 9,-8 h6" fill="none" stroke="#4a8ccf" stroke-width="3"/></svg>
</div>
<div class="abs" style="left:1906px;top:0;width:428px;height:332px;overflow:hidden">
<div class="t" style="left:24px;top:-1px;font-size:26px;line-height:30px;letter-spacing:0.45px">Name:</div>
<div class="t" style="left:24px;top:56px;font-size:26px;line-height:30px;letter-spacing:0.45px">DBA:</div>
<div class="abs" style="left:24px;top:112px;width:185px;height:40px;overflow:hidden"><div class="t" style="left:0;top:3px;font-size:26px;line-height:30px;letter-spacing:0.45px">Default Tablespace:</div></div>
<div class="t" style="left:24px;top:168px;font-size:26px;line-height:30px;letter-spacing:0.45px">Description:</div>
<div class="abs" style="left:232px;top:0;width:184px;height:332px;overflow:hidden">
<div class="t" style="left:0;top:-1px;font-size:26px;line-height:30px;letter-spacing:0.45px">Default Encoding:</div>
<div class="t" style="left:0;top:50px;font-size:26px;line-height:30px;letter-spacing:0.45px">Collate:</div>
<div class="t" style="left:0;top:102px;font-size:26px;line-height:30px;letter-spacing:0.45px">Ctype:</div>
<div class="t" style="left:0;top:254px;font-size:26px;line-height:30px;letter-spacing:0.45px">Connection Limit:</div>
</div></div>
<div class="abs" style="left:2334px;top:0;width:4px;height:1140px;background:#e6e6e6"></div>
<div class="abs" style="left:1907px;top:332px;width:426px;height:2px;background:#94a9c9"></div>
<div class="abs" style="left:2066px;top:322px;width:110px;height:19px;border:2px solid #94a9c9;border-radius:4px;background:#fff"></div>
<svg class="abs" style="left:2066px;top:322px" width="110" height="19"><polygon points="17,13 33,5 49,13" fill="#9cb0cc"/><polygon points="59,5 91,5 75,13" fill="#9cb0cc"/></svg>
<div class="abs" style="left:2168px;top:343px;width:2px;height:797px;background:#a6a6a6"></div>
<div class="abs" style="left:1907px;top:362px;width:261px;height:2px;background:#a0a0a0"></div>
<div class="abs" style="left:1907px;top:364px;width:261px;height:2px;background:#e0e0e0"></div>
<div class="abs" style="left:1907px;top:364px;width:261px;height:43px;background:#efefef"></div>
<div class="t" style="left:1955px;top:370px;font-size:26px;line-height:30px;letter-spacing:0.5px;font-weight:bold">Schemas</div>
<div class="abs" style="left:1907px;top:408px;width:261px;height:2px;background:#a0a0a0"></div>
<div class="abs" style="left:1907px;top:410px;width:261px;height:2px;background:#e0e0e0"></div>
<div class="t" style="left:1955px;top:416px;font-size:26px;line-height:30px;letter-spacing:0.5px;">Event Triggers</div>
<div class="abs" style="left:1907px;top:454px;width:261px;height:2px;background:#a0a0a0"></div>
<div class="abs" style="left:1907px;top:456px;width:261px;height:2px;background:#e0e0e0"></div>
<div class="t" style="left:1955px;top:462px;font-size:26px;line-height:30px;letter-spacing:0.5px;">Extensions</div>
<div class="abs" style="left:1907px;top:500px;width:261px;height:2px;background:#a0a0a0"></div>
<div class="abs" style="left:1907px;top:502px;width:261px;height:2px;background:#e0e0e0"></div>
<div class="t" style="left:1955px;top:508px;font-size:26px;line-height:30px;letter-spacing:0.5px;">Storage</div>
<div class="abs" style="left:1907px;top:546px;width:261px;height:2px;background:#a0a0a0"></div>
<div class="abs" style="left:1907px;top:548px;width:261px;height:2px;background:#e0e0e0"></div>
<div class="t" style="left:1955px;top:554px;font-size:26px;line-height:30px;letter-spacing:0.5px;">System Info</div>
<div class="abs" style="left:1907px;top:592px;width:261px;height:2px;background:#a0a0a0"></div>
<div class="abs" style="left:1907px;top:594px;width:261px;height:2px;background:#e0e0e0"></div>
<div class="t" style="left:1955px;top:600px;font-size:26px;line-height:30px;letter-spacing:0.5px;">Roles</div>
<div class="abs" style="left:1907px;top:638px;width:261px;height:2px;background:#a0a0a0"></div>
<div class="abs" style="left:1907px;top:640px;width:261px;height:3px;background:#e8e8e8"></div>
<svg class="abs" style="left:1914px;top:369px" width="32" height="27"><path d="M3,1 h8 l3,4 h15 a2,2 0 0 1 2,2 v17 a3,3 0 0 1 -3,3 h-25 a3,3 0 0 1 -3,-3 v-20 a3,3 0 0 1 3,-3z" fill="#e8892f"/><path d="M7,10 h18 v4 M7,10 v4 M16,10 v4" fill="none" stroke="#fff" stroke-width="1.6"/><rect x="5" y="15" width="5" height="6" fill="#fff"/><rect x="13.5" y="15" width="5" height="6" fill="#fff"/><rect x="22" y="15" width="5" height="6" fill="#fff"/></svg>
<svg class="abs" style="left:1914px;top:416px" width="32" height="26"><path d="M3,1 h8 l3,4 h15 a2,2 0 0 1 2,2 v16 a3,3 0 0 1 -3,3 h-25 a3,3 0 0 1 -3,-3 v-19 a3,3 0 0 1 3,-3z" fill="#8e8e8e"/></svg>
<svg class="abs" style="left:1914px;top:462px" width="32" height="26"><path d="M3,1 h8 l3,4 h15 a2,2 0 0 1 2,2 v16 a3,3 0 0 1 -3,3 h-25 a3,3 0 0 1 -3,-3 v-19 a3,3 0 0 1 3,-3z" fill="#8e8e8e"/><rect x="3" y="12" width="14" height="5" fill="#fff"/><path d="M26,10 a5.5,5.5 0 1 0 0,9" fill="none" stroke="#fff" stroke-width="3"/></svg>
<svg class="abs" style="left:1914px;top:508px" width="32" height="26"><path d="M3,1 h8 l3,4 h15 a2,2 0 0 1 2,2 v16 a3,3 0 0 1 -3,3 h-25 a3,3 0 0 1 -3,-3 v-19 a3,3 0 0 1 3,-3z" fill="#8e8e8e"/><rect x="5" y="10" width="3" height="3" fill="#fff"/><rect x="5" y="15" width="3" height="8" fill="#fff"/></svg>
<svg class="abs" style="left:1914px;top:554px" width="32" height="26"><path d="M3,1 h8 l3,4 h15 a2,2 0 0 1 2,2 v16 a3,3 0 0 1 -3,3 h-25 a3,3 0 0 1 -3,-3 v-19 a3,3 0 0 1 3,-3z" fill="#8e8e8e"/><rect x="5" y="10" width="3" height="3" fill="#fff"/><rect x="5" y="15" width="3" height="8" fill="#fff"/></svg>
<svg class="abs" style="left:1914px;top:600px" width="32" height="26"><path d="M3,1 h8 l3,4 h15 a2,2 0 0 1 2,2 v16 a3,3 0 0 1 -3,3 h-25 a3,3 0 0 1 -3,-3 v-19 a3,3 0 0 1 3,-3z" fill="#8e8e8e"/><circle cx="16" cy="12" r="3" fill="none" stroke="#fff" stroke-width="1.6"/><path d="M9,22 q0,-6 7,-6 q7,0 7,6z" fill="none" stroke="#fff" stroke-width="1.6"/></svg>
<div class="abs" style="left:2170px;top:343px;width:164px;height:53px;background:#fff"></div>
<div class="t" style="left:2175px;top:357px;font-size:26px;line-height:30px;letter-spacing:0.4px">Name</div>
<div class="abs" style="left:2170px;top:396px;width:164px;height:2px;background:#e6e6e6"></div>
<div class="abs" style="left:2170px;top:434px;width:164px;height:36px;background:#f3f4f4"></div>
<div class="abs" style="left:2170px;top:506px;width:164px;height:36px;background:#f3f4f4"></div>
<div class="abs" style="left:2170px;top:578px;width:164px;height:36px;background:#f3f4f4"></div>
<div class="abs" style="left:2170px;top:650px;width:164px;height:36px;background:#f3f4f4"></div>
<div class="abs" style="left:2170px;top:722px;width:164px;height:36px;background:#f3f4f4"></div>
<div class="abs" style="left:2170px;top:794px;width:164px;height:36px;background:#f3f4f4"></div>
<div class="abs" style="left:2170px;top:866px;width:164px;height:36px;background:#f3f4f4"></div>
<div class="abs" style="left:2170px;top:938px;width:164px;height:36px;background:#f3f4f4"></div>
<div class="abs" style="left:2170px;top:1010px;width:164px;height:36px;background:#f3f4f4"></div>
<div class="abs" style="left:2170px;top:1082px;width:164px;height:36px;background:#f3f4f4"></div>
<svg class="abs" style="left:2179px;top:400px" width="28" height="33"><path d="M3,1.5 h13 l7.5,7.5 v19.5 a2,2 0 0 1 -2,2 h-18.5 a2,2 0 0 1 -2,-2 v-25 a2,2 0 0 1 2,-2z" fill="none" stroke="#4a8ccf" stroke-width="3"/><path d="M5,10 h3 M5,15 h3 M5,20 h3" stroke="#4a8ccf" stroke-width="1.5"/><rect x="10" y="8" width="6" height="4" fill="#4a8ccf"/><rect x="10" y="13" width="6" height="4" fill="#4a8ccf"/><rect x="10" y="18" width="6" height="4" fill="#4a8ccf"/></svg>
<div class="t" style="left:2212px;top:402px;font-size:26px;line-height:30px;letter-spacing:0.4px">public</div>
<div class="abs" style="left:0;top:800px;width:68px;height:104px;overflow:hidden">
<div class="t" style="left:-1px;top:13px;font-size:26px;line-height:30px">_immat</div>
<div class="t" style="left:-1px;top:52px;font-size:26px;line-height:30px">)</div>
<div class="t" style="left:-10px;top:88px;font-size:26px;line-height:30px">_analyse</div>
</div>
<div class="abs" style="left:0;top:904px;width:68px;height:2px;background:#e6e6e6"></div>
<div class="abs" style="left:0;top:914px;width:68px;height:2px;background:#e6e6e6"></div>
<div class="abs" style="left:0;top:963px;width:68px;height:2px;background:#e6e6e6"></div>
<div class="abs" style="left:0;top:1020px;width:68px;height:2px;background:#e6e6e6"></div>
<svg class="abs" style="left:0;top:925px" width="68" height="30"><path d="M-2,6 h8 v5 h-8" fill="none" stroke="#111" stroke-width="2"/><rect x="31" y="6" width="19" height="18" fill="none" stroke="#111" stroke-width="2.2"/><rect x="31" y="9" width="19" height="2" fill="#111"/></svg>
</body></html>
